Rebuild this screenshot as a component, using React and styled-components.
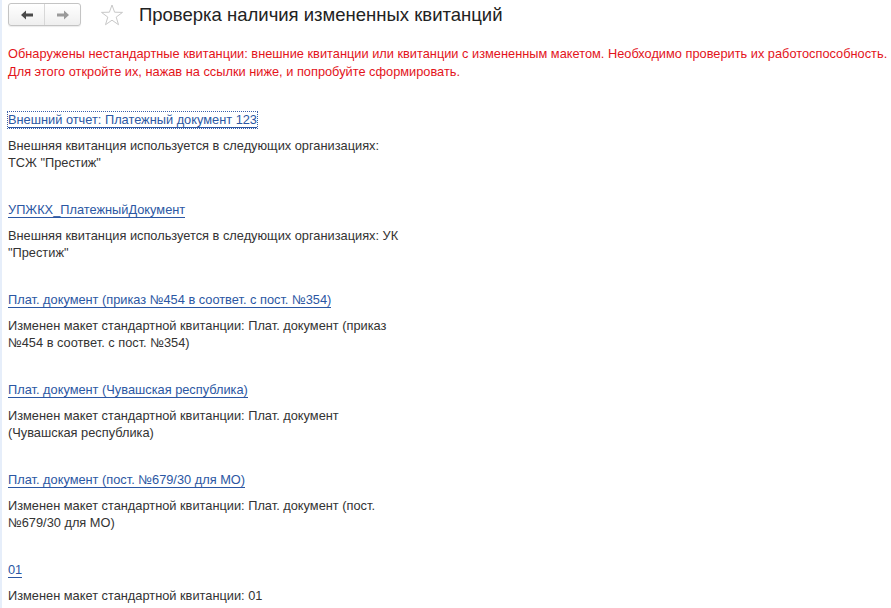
import React from "react";
import styled, { createGlobalStyle } from "styled-components";

const GlobalStyle = createGlobalStyle`
  html, body {
    margin: 0;
    padding: 0;
    background: #fff;
  }
  body {
    font-family: "Liberation Sans", Arial, sans-serif;
  }
`;

const items = [
  {
    link: "Внешний отчет: Платежный документ 123",
    text: 'Внешняя квитанция используется в следующих организациях: ТСЖ "Престиж"',
    focused: true,
  },
  {
    link: "УПЖКХ_ПлатежныйДокумент",
    text: 'Внешняя квитанция используется в следующих организациях: УК "Престиж"',
  },
  {
    link: "Плат. документ (приказ №454 в соответ. с пост. №354)",
    text: "Изменен макет стандартной квитанции: Плат. документ (приказ №454 в соответ. с пост. №354)",
  },
  {
    link: "Плат. документ (Чувашская республика)",
    text: "Изменен макет стандартной квитанции: Плат. документ (Чувашская республика)",
  },
  {
    link: "Плат. документ (пост. №679/30 для МО)",
    text: "Изменен макет стандартной квитанции: Плат. документ (пост. №679/30 для МО)",
  },
  {
    link: "01",
    text: "Изменен макет стандартной квитанции: 01",
  },
];

const App = () => {
  return (
    <Page>
      <GlobalStyle />
      <Header>
        <NavGroup>
          <NavBtn>
            <Arrow dir="left" color="#4a4a4a" />
          </NavBtn>
          <NavBtn>
            <Arrow dir="right" color="#9a9a9a" />
          </NavBtn>
        </NavGroup>
        <Star />
        <Title>Проверка наличия измененных квитанций</Title>
      </Header>
      <Warning>
        Обнаружены нестандартные квитанции: внешние квитанции или квитанции с
        измененным макетом. Необходимо проверить их работоспособность.
        <br />
        Для этого откройте их, нажав на ссылки ниже, и попробуйте сформировать.
      </Warning>
      <List>
        {items.map((item) => (
          <Block key={item.link}>
            <LinkRow>
              <ReportLink href="#" $focused={item.focused}>
                {item.link}
              </ReportLink>
            </LinkRow>
            <Description>{item.text}</Description>
          </Block>
        ))}
      </List>
    </Page>
  );
};

const Arrow = ({ dir, color }) => (
  <svg width="12" height="10" viewBox="0 0 12 10">
    <g transform={dir === "right" ? "matrix(-1 0 0 1 12 0)" : undefined}>
      <path d="M0 5 L5 0.5 L5 3.5 L12 3.5 L12 6.5 L5 6.5 L5 9.5 Z" fill={color} />
    </g>
  </svg>
);

const Star = () => (
  <StarIcon width="24" height="22" viewBox="0 0 24 22">
    <path
      d="M12 1 L14.6 8.2 L22.5 8.4 L16.2 13.1 L18.5 20.7 L12 16.2 L5.5 20.7 L7.8 13.1 L1.5 8.4 L9.4 8.2 Z"
      fill="none"
      stroke="#c8c8c8"
      strokeWidth="1"
      strokeLinejoin="round"
    />
  </StarIcon>
);

export default App;

const Page = styled.div`
  height: 608px;
  overflow: hidden;
  border-left: 2px solid #e6eefa;
  padding: 3px 0 0 6px;
  box-sizing: border-box;
`;

const Header = styled.div`
  display: flex;
  align-items: center;
  height: 23px;
`;

const NavGroup = styled.div`
  display: flex;
  height: 21px;
  border: 1px solid #c4c4c4;
  border-radius: 3px;
  background: linear-gradient(#ffffff, #efefef);
  box-shadow: 0 1px 1px rgba(0, 0, 0, 0.08);
`;

const NavBtn = styled.div`
  width: 35px;
  display: flex;
  align-items: center;
  justify-content: center;
  & + & {
    border-left: 1px solid #d8d8d8;
  }
`;

const StarIcon = styled.svg`
  margin-left: 19px;
  margin-top: 1px;
`;

const Title = styled.div`
  margin-left: 15px;
  font-size: 18.5px;
  color: #222;
  margin-top: 1px;
`;

const Warning = styled.div`
  margin-top: 19px;
  font-size: 12.8px;
  line-height: 18px;
  color: #e3141b;
`;

const List = styled.div`
  margin-top: 29px;
  display: flex;
  flex-direction: column;
`;

const Block = styled.div`
  height: 90px;
  flex-shrink: 0;
`;

const LinkRow = styled.div`
  height: 19px;
`;

const ReportLink = styled.a`
  font-size: 12.8px;
  line-height: 15px;
  color: #2b57a3;
  text-decoration: none;
  border-bottom: 1px solid #2b57a3;
  outline: ${(p) => (p.$focused ? "1px dotted #3b5fa8" : "none")};
  outline-offset: 0px;
`;

const Description = styled.div`
  margin-top: 8px;
  width: 402px;
  font-size: 12.8px;
  line-height: 17px;
  color: #333;
`;
